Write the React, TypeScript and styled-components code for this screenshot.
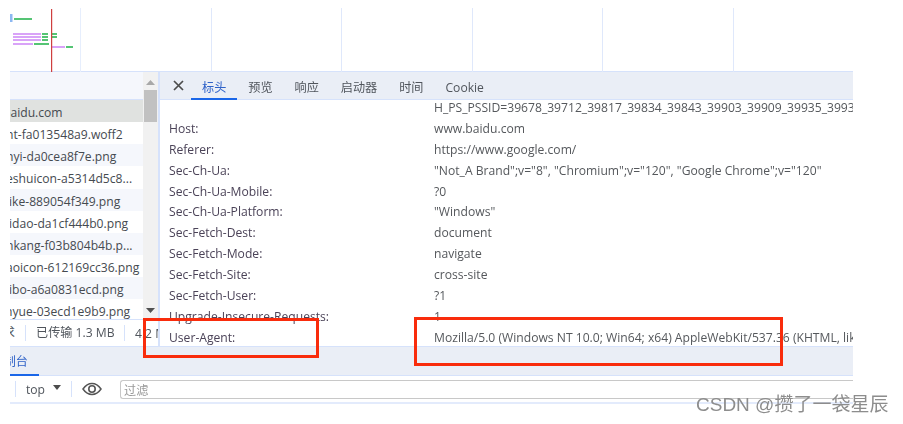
import React from 'react';
import styled, { createGlobalStyle } from 'styled-components';

const FONT = '"Open Sans", "Noto Sans CJK SC", sans-serif';
const EDGE = '#d6e2fb';

// the left side of the list is cut off by the crop, so each name gets its own shift
const requests = [
  { name: 'baidu.com', shift: -7 },
  { name: 'nt-fa013548a9.woff2', shift: -4 },
  { name: 'nyi-da0cea8f7e.png', shift: -4 },
  { name: 'eshuicon-a5314d5c8...', shift: -4 },
  { name: 'ike-889054f349.png', shift: -1 },
  { name: 'idao-da1cf444b0.png', shift: -1 },
  { name: 'nkang-f03b804b4b.p...', shift: -4 },
  { name: 'aoicon-612169cc36.png', shift: -4 },
  { name: 'ibo-a6a0831ecd.png', shift: -1 },
  { name: 'nyue-03ecd1e9b9.png', shift: -5 },
];

const headers = [
  ['', 'H_PS_PSSID=39678_39712_39817_39834_39843_39903_39909_39935_39936_39938_39942'],
  ['Host:', 'www.baidu.com'],
  ['Referer:', 'https://www.google.com/'],
  ['Sec-Ch-Ua:', '"Not_A Brand";v="8", "Chromium";v="120", "Google Chrome";v="120"'],
  ['Sec-Ch-Ua-Mobile:', '?0'],
  ['Sec-Ch-Ua-Platform:', '"Windows"'],
  ['Sec-Fetch-Dest:', 'document'],
  ['Sec-Fetch-Mode:', 'navigate'],
  ['Sec-Fetch-Site:', 'cross-site'],
  ['Sec-Fetch-User:', '?1'],
  ['Upgrade-Insecure-Requests:', '1'],
  ['User-Agent:', 'Mozilla/5.0 (Windows NT 10.0; Win64; x64) AppleWebKit/537.36 (KHTML, like Gecko) Chrome/120.0.0.0'],
];

const tabs = ['标头', '预览', '响应', '启动器', '时间', 'Cookie'];

const GlobalStyle = createGlobalStyle`
  html, body {
    margin: 0;
    background: #fff;
    overflow: hidden;
  }
`;

const Page = styled.div`
  position: relative;
  width: 903px;
  height: 424px;
  padding-left: 10px;
  box-sizing: border-box;
  overflow: hidden;
  font-family: ${FONT};
  font-size: 12.13px;
  color: #4a4a4a;
  filter: blur(0.3px);
`;

const Devtools = styled.div`
  width: 843px;
`;

const Overview = styled.div`
  height: 72px;
  padding-top: 8px;
  box-sizing: border-box;
  display: flex;
  align-items: stretch;
`;

const Waterfall = styled.svg`
  width: 69.5px;
  height: 64px;
  flex: none;
  display: block;
`;

const GridCell = styled.div`
  width: 130.5px;
  flex: none;
  box-sizing: border-box;
  border-right: 1.5px solid #dfe8fb;
`;

const FirstLine = styled.div`
  width: 1.5px;
  flex: none;
  background: #e6eefd;
`;

const Split = styled.div`
  display: flex;
  height: 276px;
  box-sizing: border-box;
  border-top: 1px solid ${EDGE};
  border-bottom: 1px solid ${EDGE};
  margin-top: -1px;
`;

const ListColumn = styled.div`
  width: 148px;
  flex: none;
  display: flex;
  flex-direction: column;
  overflow: hidden;
`;

const ListBody = styled.div`
  flex: 1;
  display: flex;
  min-height: 0;
`;

const ListHead = styled.div`
  height: 28px;
  flex: none;
  background: #f5f7fc;
  border-bottom: 1px solid ${EDGE};
  box-sizing: border-box;
`;

const Rows = styled.div`
  width: 133px;
  flex: none;
  overflow: hidden;
`;

const Row = styled.div<{ $selected: boolean; $even: boolean }>`
  height: 22.15px;
  line-height: 25px;
  white-space: nowrap;
  overflow: hidden;
  background: ${(p) => (p.$selected ? '#e0e2e0' : p.$even ? '#f5f7fc' : '#fff')};
  color: #454a50;
`;

const RowName = styled.span<{ $shift: number }>`
  display: inline-block;
  margin-left: ${(p) => p.$shift}px;
`;

const Scrollbar = styled.div`
  width: 15px;
  flex: none;
  background: #f1f1f1;
  display: flex;
  flex-direction: column;
  align-items: center;
  margin-top: -28px;
  position: relative;
`;

const ScrollArrow = styled.svg<{ $down?: boolean }>`
  width: 9px;
  height: 5px;
  flex: none;
  margin: ${(p) => (p.$down ? '0 0 6px' : '8px 0 0')};
`;

const ScrollThumb = styled.div`
  width: 13px;
  height: 32px;
  margin-top: 5px;
  background: #c1c1c1;
  flex: none;
`;

const ScrollGap = styled.div`
  flex: 1;
`;

const StatusBar = styled.div`
  height: 27px;
  flex: none;
  box-sizing: border-box;
  border-top: 1px solid ${EDGE};
  display: flex;
  align-items: center;
  white-space: nowrap;
  color: #50555c;
  background: #fff;
`;

const StatusCut = styled.span`
  width: 16px;
  flex: none;
  height: 16px;
  line-height: 16px;
  direction: rtl;
  overflow: hidden;
  box-sizing: border-box;
  padding-right: 10px;
  border-right: 1px solid ${EDGE};
`;

const StatusItem = styled.span`
  width: 99px;
  flex: none;
  height: 16px;
  line-height: 16px;
  box-sizing: border-box;
  padding-left: 10px;
  border-right: 1px solid ${EDGE};
`;

const StatusRest = styled.span`
  padding-left: 10px;
`;

const DetailPane = styled.div`
  flex: 1;
  min-width: 0;
  border-left: 2px solid ${EDGE};
  display: flex;
  flex-direction: column;
`;

const TabBar = styled.div`
  height: 28px;
  flex: none;
  box-sizing: border-box;
  background: #eaeef6;
  border-bottom: 1px solid ${EDGE};
  display: flex;
  align-items: stretch;
`;

const CloseIcon = styled.svg`
  width: 11px;
  height: 11px;
  flex: none;
  align-self: center;
  margin: 0 7px 0 13px;
`;

const Tab = styled.div<{ $active?: boolean }>`
  padding: 0 11px;
  line-height: 31px;
  height: 28px;
  box-sizing: border-box;
  color: ${(p) => (p.$active ? '#2f62c8' : '#50555c')};
  border-bottom: 2px solid ${(p) => (p.$active ? '#1a66e8' : 'transparent')};
`;

const HeaderList = styled.div`
  flex: 1;
  min-height: 0;
  overflow: hidden;
  padding-top: 2px;
`;

const HeaderRow = styled.div`
  display: grid;
  grid-template-columns: 265px 1fr;
  height: 20.9px;
  line-height: 12px;
  padding-left: 9px;
  white-space: nowrap;
`;

const HeaderName = styled.span`
  color: #4b4358;
`;

const HeaderValue = styled.span`
  color: #55585c;
  overflow: hidden;
`;

const Drawer = styled.div`
  height: 29px;
  box-sizing: border-box;
  background: #eaeef6;
  border-bottom: 1px solid ${EDGE};
`;

const DrawerTab = styled.div`
  width: 29px;
  height: 29px;
  box-sizing: border-box;
  padding-right: 11px;
  line-height: 30px;
  overflow: hidden;
  white-space: nowrap;
  direction: rtl;
  color: #2f62c8;
  border-bottom: 2px solid #1a66e8;
`;

const ConsoleBar = styled.div`
  height: 28px;
  box-sizing: border-box;
  border-bottom: 2px solid #e3ebfc;
  display: flex;
  align-items: center;
`;

const ToolDivider = styled.span`
  width: 1px;
  height: 16px;
  background: ${EDGE};
  flex: none;
`;

const LeadDivider = styled(ToolDivider)`
  margin-left: 5px;
`;

const ContextPick = styled.span`
  display: flex;
  align-items: center;
  gap: 8px;
  margin: 0 10px 0 10px;
  color: #50555c;
  line-height: 18px;
  padding-top: 2px;
`;

const Caret = styled.svg`
  width: 8px;
  height: 5px;
  margin-top: -6px;
`;

const EyeIcon = styled.svg`
  width: 20px;
  height: 14px;
  margin: 0 18px 0 10px;
  flex: none;
`;

const FilterInput = styled.div`
  flex: 1;
  height: 19px;
  line-height: 19px;
  padding-left: 3px;
  border: 1px solid #c8c8c8;
  border-right: none;
  border-radius: 3px 0 0 3px;
  color: #9a9a9a;
  box-sizing: border-box;
`;

const Highlight = styled.div<{ $x: number; $y: number; $w: number; $h: number }>`
  position: absolute;
  left: ${(p) => p.$x}px;
  top: ${(p) => p.$y}px;
  width: ${(p) => p.$w}px;
  height: ${(p) => p.$h}px;
  box-sizing: border-box;
  border: 3px solid #f92c0c;
`;

const Watermark = styled.div`
  position: absolute;
  left: 696px;
  top: 393px;
  font-family: "Liberation Sans", "Noto Sans CJK SC", sans-serif;
  font-size: 19px;
  line-height: 24px;
  color: #8d8d8d;
  white-space: nowrap;
`;

function TimelineBars() {
  return (
    <Waterfall viewBox="0 0 69.500 64">
      <rect x="0" y="6" width="2.500" height="8" fill="#8db8f2" />
      <rect x="4" y="10" width="18" height="2" fill="#55c474" />
      <rect x="3" y="25" width="28" height="2" fill="#d9a3f8" />
      <rect x="32" y="25" width="6" height="2" fill="#55c474" />
      <rect x="42" y="25" width="5" height="2" fill="#55c474" />
      <rect x="3" y="28" width="28" height="2" fill="#d9a3f8" />
      <rect x="32" y="28" width="6" height="2" fill="#55c474" />
      <rect x="42" y="28" width="5" height="2" fill="#55c474" />
      <rect x="3" y="31" width="28" height="2" fill="#d9a3f8" />
      <rect x="32" y="31" width="6" height="2" fill="#55c474" />
      <rect x="3" y="35" width="20" height="2" fill="#d9a3f8" />
      <rect x="24" y="35" width="15" height="2" fill="#55c474" />
      <rect x="42" y="38" width="13" height="2" fill="#d9a3f8" />
      <rect x="56" y="38" width="7" height="2" fill="#55c474" />
      <rect x="41" y="1" width="1.200" height="63" fill="#cf3f3f" />
    </Waterfall>
  );
}

export default function App() {
  return (
    <Page>
      <GlobalStyle />
      <Devtools>
        <Overview>
          <TimelineBars />
          <FirstLine />
          <GridCell />
          <GridCell />
          <GridCell />
          <GridCell />
          <GridCell />
        </Overview>
        <Split>
          <ListColumn>
            <ListHead />
            <ListBody>
              <Rows>
                {requests.map((r, i) => (
                  <Row key={r.name} $selected={i === 0} $even={i % 2 === 0}>
                    <RowName $shift={r.shift}>{r.name}</RowName>
                  </Row>
                ))}
              </Rows>
              <Scrollbar>
                <ScrollArrow viewBox="0 0 9 5"><path d="M4.500 0 9 5H0z" fill="#a8a8a8" /></ScrollArrow>
                <ScrollThumb />
                <ScrollGap />
                <ScrollArrow $down viewBox="0 0 9 5"><path d="M0 0h9L4.500 5z" fill="#505050" /></ScrollArrow>
              </Scrollbar>
            </ListBody>
            <StatusBar>
              <StatusCut>求</StatusCut>
              <StatusItem>已传输 1.3 MB</StatusItem>
              <StatusRest>4.2 MB</StatusRest>
            </StatusBar>
          </ListColumn>
          <DetailPane>
            <TabBar>
              <CloseIcon viewBox="0 0 11 11"><path d="M1 1l9 9M10 1l-9 9" stroke="#4c4c4c" strokeWidth="1.700" fill="none" /></CloseIcon>
              {tabs.map((t, i) => (
                <Tab key={t} $active={i === 0}>{t}</Tab>
              ))}
            </TabBar>
            <HeaderList>
              {headers.map(([name, value]) => (
                <HeaderRow key={value}>
                  <HeaderName>{name}</HeaderName>
                  <HeaderValue>{value}</HeaderValue>
                </HeaderRow>
              ))}
            </HeaderList>
          </DetailPane>
        </Split>
        <Drawer>
          <DrawerTab>控制台</DrawerTab>
        </Drawer>
        <ConsoleBar>
          <LeadDivider />
          <ContextPick>
            top
            <Caret viewBox="0 0 8 5"><path d="M0 0h8L4 5z" fill="#4c4c4c" /></Caret>
          </ContextPick>
          <ToolDivider />
          <EyeIcon viewBox="0 0 20 14">
            <path d="M1 7c2.500-3.600 5.500-5.500 9-5.500S16.500 3.400 19 7c-2.500 3.600-5.500 5.500-9 5.500S3.500 10.600 1 7z" fill="none" stroke="#555" strokeWidth="1.500" />
            <circle cx="10" cy="7" r="3.200" fill="none" stroke="#555" strokeWidth="1.600" />
          </EyeIcon>
          <FilterInput>过滤</FilterInput>
        </ConsoleBar>
      </Devtools>
      <Highlight $x={143} $y={318} $w={176} $h={40} />
      <Highlight $x={414} $y={317} $w={369} $h={49} />
      <Watermark>CSDN @攒了一袋星辰</Watermark>
    </Page>
  );
}
